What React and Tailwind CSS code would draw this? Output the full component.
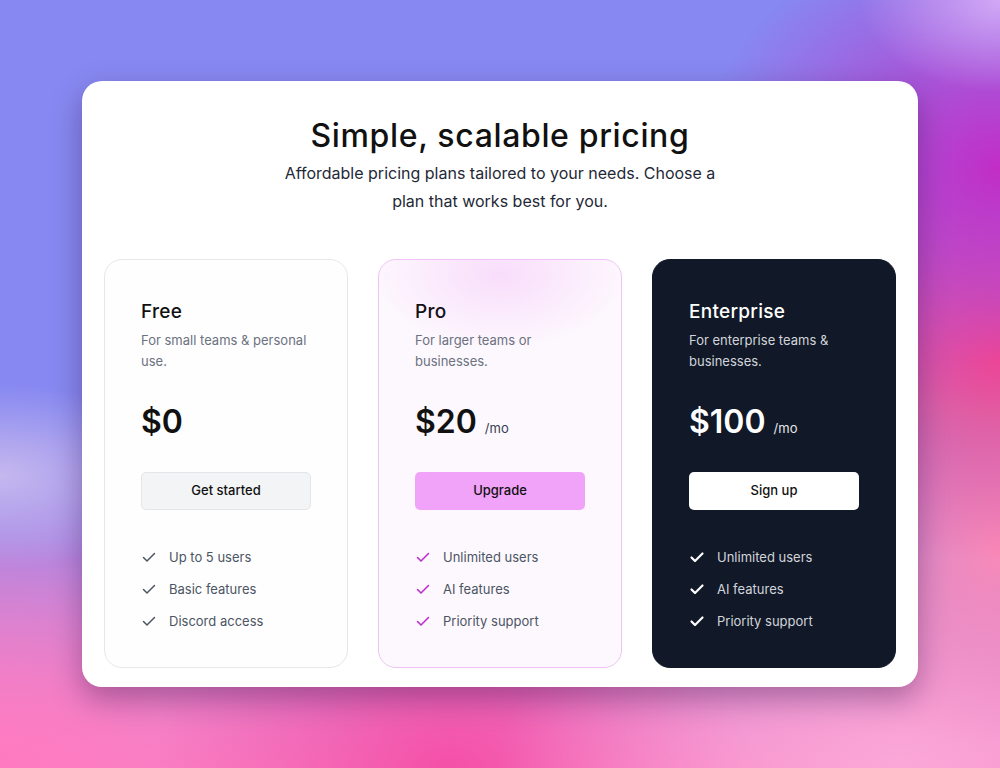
import React from 'react';

const plans = [
  {
    name: 'Free',
    desc: 'For small teams & personal use.',
    price: '$0',
    per: false,
    cta: 'Get started',
    features: ['Up to 5 users', 'Basic features', 'Discord access'],
    variant: 'free',
  },
  {
    name: 'Pro',
    desc: 'For larger teams or businesses.',
    price: '$20',
    per: true,
    cta: 'Upgrade',
    features: ['Unlimited users', 'AI features', 'Priority support'],
    variant: 'pro',
  },
  {
    name: 'Enterprise',
    desc: 'For enterprise teams & businesses.',
    price: '$100',
    per: true,
    cta: 'Sign up',
    features: ['Unlimited users', 'AI features', 'Priority support'],
    variant: 'enterprise',
  },
];

const styles = {
  free: {
    card: 'bg-[#fefefe] border border-[#e6e7eb]',
    title: 'text-[#111111]',
    desc: 'text-[#6b7280]',
    price: 'text-[#111111]',
    per: 'text-[#374151]',
    button: 'bg-[#f3f4f6] border border-[#e3e5e8] text-[#111111]',
    check: '#4b5563',
    checkWidth: 1.5,
    feature: 'text-[#4b5563]',
  },
  pro: {
    card: 'bg-[#fdf8fe] border border-[#efc3f5]',
    title: 'text-[#111111]',
    desc: 'text-[#6b7280]',
    price: 'text-[#111111]',
    per: 'text-[#374151]',
    button: 'bg-[#f0a3f8] text-[#111111]',
    check: '#c026d3',
    checkWidth: 1.5,
    feature: 'text-[#4b5563]',
  },
  enterprise: {
    card: 'bg-[#111827] border border-[#111827]',
    title: 'text-white',
    desc: 'text-[#d1d5db]',
    price: 'text-white',
    per: 'text-[#e5e7eb]',
    button: 'bg-white text-[#111111]',
    check: '#ffffff',
    checkWidth: 2.2,
    feature: 'text-[#d1d5db]',
  },
};

const Check = ({ color, width }) => (
  <svg width="16" height="16" viewBox="0 0 16 16" fill="none">
    <path d="M2.5 8.5 L6 12 L13.5 4.5" stroke={color} strokeWidth={width} strokeLinecap="round" strokeLinejoin="round" />
  </svg>
);

const PlanCard = ({ plan }) => {
  const s = styles[plan.variant];
  return (
    <div className={`relative overflow-hidden rounded-[18px] px-9 pt-10 pb-9 ${s.card}`}>
      {plan.variant === 'pro' && (
        <div className="pointer-events-none absolute left-1/2 top-[-60px] h-[150px] w-[260px] -translate-x-1/2 rounded-full bg-[radial-gradient(closest-side,rgba(242,180,246,0.4),rgba(242,180,246,0))]" />
      )}
      <div className="relative">
        <h3 className={`text-[19px] leading-6 font-medium tracking-[0.015em] ${s.title}`}>{plan.name}</h3>
        <p className={`mt-[6px] text-[13px] leading-[21px] ${s.desc}`}>{plan.desc}</p>
        <div className="mt-[30px] flex items-baseline gap-2">
          <span className={`text-[32px] leading-10 font-semibold ${s.price}`}>{plan.price}</span>
          {plan.per && <span className={`text-[13px] ${s.per}`}>/mo</span>}
        </div>
        <button className={`mt-[30px] h-[38px] w-full rounded-[5px] text-[13px] font-medium ${s.button}`}>
          {plan.cta}
        </button>
        <ul className="mt-[37px] flex flex-col gap-3">
          {plan.features.map((f) => (
            <li key={f} className="flex items-center gap-3 h-5">
              <Check color={s.check} width={s.checkWidth} />
              <span className={`text-[13px] leading-5 ${s.feature}`}>{f}</span>
            </li>
          ))}
        </ul>
      </div>
    </div>
  );
};

export default function App() {
  return (
    <div
      className="min-h-screen w-full flex items-center justify-center font-['Inter',sans-serif] bg-[radial-gradient(ellipse_14%_12%_at_100%_0%,#d2a8f6_0%,rgba(210,168,246,0)_100%),radial-gradient(ellipse_30%_32%_at_100%_22%,#c22dc6_0%,rgba(194,45,198,0)_100%),radial-gradient(ellipse_28%_26%_at_100%_47%,#f84c8a_0%,rgba(248,76,138,0)_100%),radial-gradient(ellipse_22%_25%_at_100%_72%,#f98ab8_0%,rgba(249,138,184,0)_100%),radial-gradient(ellipse_40%_30%_at_90%_100%,#fba8d8_0%,rgba(251,168,216,0)_100%),radial-gradient(ellipse_30%_28%_at_45%_100%,#f450a8_0%,rgba(244,80,168,0)_100%),radial-gradient(ellipse_35%_30%_at_0%_100%,#ff7ac0_0%,rgba(255,122,192,0)_100%),radial-gradient(ellipse_18%_12%_at_0%_62%,#c4b8ef_0%,rgba(196,184,239,0)_100%),linear-gradient(180deg,#8788f1_0%,#8788f1_55%,#f784c6_100%)]"
    >
      <div className="w-[836px] rounded-[20px] bg-white px-[22px] pt-[37px] pb-[19px] shadow-[0_12px_30px_rgba(40,10,60,0.35)]">
        <div className="flex flex-col items-center text-center">
          <h1 className="text-[32px] leading-9 font-medium tracking-[0.02em] text-[#111111]">Simple, scalable pricing</h1>
          <p className="mt-[5px] max-w-[440px] text-[16px] leading-7 text-[#1f2937]">
            Affordable pricing plans tailored to your needs. Choose a plan that works best for you.
          </p>
        </div>
        <div className="mt-[44px] grid grid-cols-3 gap-[30px]">
          {plans.map((p) => (
            <PlanCard key={p.name} plan={p} />
          ))}
        </div>
      </div>
    </div>
  );
}
